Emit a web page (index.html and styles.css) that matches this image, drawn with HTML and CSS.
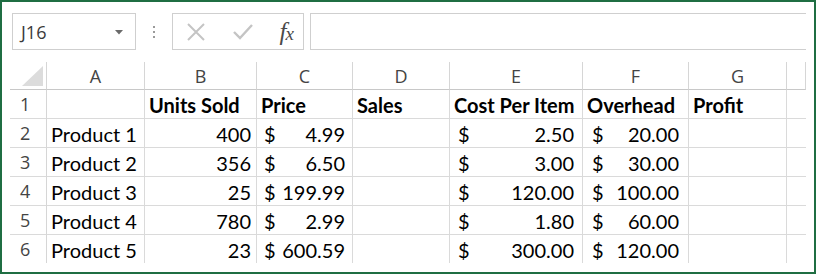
FILE: index.html
```html
<!DOCTYPE html>
<html>
<head>
<meta charset="utf-8">
<link rel="stylesheet" href="styles.css">
</head>
<body>
<div class="frame">
  <div class="toolbar">
    <div class="namebox">
      <span class="name">J16</span>
      <svg class="caret" width="8" height="5" viewBox="0 0 8 5"><polygon points="0,0 8,0 4,4.5" fill="#6a6a6a"/></svg>
    </div>
    <div class="grip"><i></i><i></i><i></i></div>
    <div class="fxbox">
      <svg class="icon" width="20" height="18" viewBox="0 0 20 18"><path d="M2 1 L18 17 M18 1 L2 17" stroke="#c4c4c4" stroke-width="2" fill="none"/></svg>
      <svg class="icon" width="20" height="18" viewBox="0 0 20 18"><path d="M1 9 L7 15 L19 2" stroke="#c4c4c4" stroke-width="2.4" fill="none"/></svg>
      <span class="fx">f<span class="x">x</span></span>
    </div>
    <div class="formula"></div>
  </div>
  <div class="sheet">
    <div class="hd corner"><svg width="21" height="20" viewBox="0 0 21 20"><polygon points="0,20 21,20 21,0" fill="#dcdcdc"/></svg></div>
    <div class="hd col">A</div><div class="hd col">B</div><div class="hd col">C</div><div class="hd col">D</div><div class="hd col">E</div><div class="hd col">F</div><div class="hd col">G</div><div class="hd col"></div>

    <div class="rn">1</div>
    <div class="c"></div><div class="c b">Units Sold</div><div class="c b">Price</div><div class="c b">Sales</div><div class="c b">Cost Per Item</div><div class="c b">Overhead</div><div class="c b">Profit</div><div class="c"></div>

    <div class="rn">2</div>
    <div class="c">Product 1</div><div class="c r">400</div><div class="c cur pc"><span>$</span><span>4.99</span></div><div class="c"></div><div class="c cur pe"><span>$</span><span>2.50</span></div><div class="c cur pf"><span>$</span><span>20.00</span></div><div class="c"></div><div class="c"></div>

    <div class="rn">3</div>
    <div class="c">Product 2</div><div class="c r">356</div><div class="c cur pc"><span>$</span><span>6.50</span></div><div class="c"></div><div class="c cur pe"><span>$</span><span>3.00</span></div><div class="c cur pf"><span>$</span><span>30.00</span></div><div class="c"></div><div class="c"></div>

    <div class="rn">4</div>
    <div class="c">Product 3</div><div class="c r">25</div><div class="c cur pc"><span>$</span><span>199.99</span></div><div class="c"></div><div class="c cur pe"><span>$</span><span>120.00</span></div><div class="c cur pf"><span>$</span><span>100.00</span></div><div class="c"></div><div class="c"></div>

    <div class="rn">5</div>
    <div class="c">Product 4</div><div class="c r">780</div><div class="c cur pc"><span>$</span><span>2.99</span></div><div class="c"></div><div class="c cur pe"><span>$</span><span>1.80</span></div><div class="c cur pf"><span>$</span><span>60.00</span></div><div class="c"></div><div class="c"></div>

    <div class="rn last">6</div>
    <div class="c last">Product 5</div><div class="c r last">23</div><div class="c cur pc last"><span>$</span><span>600.59</span></div><div class="c last"></div><div class="c cur pe last"><span>$</span><span>300.00</span></div><div class="c cur pf last"><span>$</span><span>120.00</span></div><div class="c last"></div><div class="c last"></div>
  </div>
</div>
</body>
</html>
```
FILE: styles.css
```css
* { box-sizing: border-box; }
html, body { margin: 0; padding: 0; background: #fff; }
.frame {
  width: 816px;
  height: 274px;
  border: 2px solid #1f6e43;
  background: #fff;
  padding: 11px 0 0 8px;
  overflow: hidden;
}
.toolbar {
  display: flex;
  align-items: center;
  height: 37px;
}
.namebox {
  width: 124px;
  height: 37px;
  margin-left: 2px;
  border: 1px solid #cfcfcf;
  display: flex;
  align-items: center;
  justify-content: space-between;
  padding: 0 12px 0 8px;
}
.name {
  font-family: "Open Sans", sans-serif;
  font-size: 18px;
  color: #3a3a3a;
}
.caret { margin-top: 1px; }
.grip {
  width: 36px;
  display: flex;
  flex-direction: column;
  align-items: center;
  gap: 3px;
}
.grip i {
  display: block;
  width: 2px;
  height: 2px;
  background: #9a9a9a;
}
.fxbox {
  width: 132px;
  height: 37px;
  border: 1px solid #cfcfcf;
  display: flex;
  align-items: center;
  padding: 0 10px 0 13px;
  justify-content: space-between;
}
.fx {
  font-family: "Liberation Serif", serif;
  font-style: italic;
  font-size: 25px;
  color: #4a4a4a;
  letter-spacing: -1px;
  line-height: 1;
}
.fx .x { font-size: 19px; }
.formula {
  width: 496px;
  height: 37px;
  margin-left: 6px;
  border: 1px solid #cfcfcf;
  border-right: none;
}
.sheet {
  margin-top: 12px;
  display: grid;
  grid-template-columns: 37px 98px 112px 96px 97px 133px 106px 98px 19px;
  grid-template-rows: 28px 29px 29px 29px 29px 29px 28px;
  font-family: "Lato", sans-serif;
  font-size: 20px;
  color: #000;
}
.hd {
  border-right: 1px solid #d6d6d6;
  border-bottom: 1px solid #c8c8c8;
  font-family: "Open Sans", sans-serif;
  font-size: 18px;
  color: #444;
  display: flex;
  align-items: center;
  justify-content: center;
}
.hd:last-child { border-right: none; }
.corner {
  justify-content: flex-end;
  align-items: flex-end;
  padding: 0 3px 3px 0;
}
.rn {
  border-right: 1px solid #d6d6d6;
  border-bottom: 1px solid #dadada;
  font-family: "Open Sans", sans-serif;
  font-size: 18px;
  color: #444;
  display: flex;
  align-items: center;
  padding-left: 10px;
}
.c {
  border-right: 1px solid #dadada;
  border-bottom: 1px solid #dadada;
  display: flex;
  align-items: center;
  padding: 1px 4px 0 4px;
  white-space: nowrap;
}
.c:nth-child(9n) { border-right: none; }
.b { font-weight: 700; }
.r { justify-content: flex-end; padding-right: 5px; }
.cur { justify-content: space-between; }
.pc { padding-left: 7px; padding-right: 7px; }
.pe { padding-left: 8px; padding-right: 8px; }
.pf { padding-left: 9px; padding-right: 9px; }
.last { border-bottom: none; }
```
